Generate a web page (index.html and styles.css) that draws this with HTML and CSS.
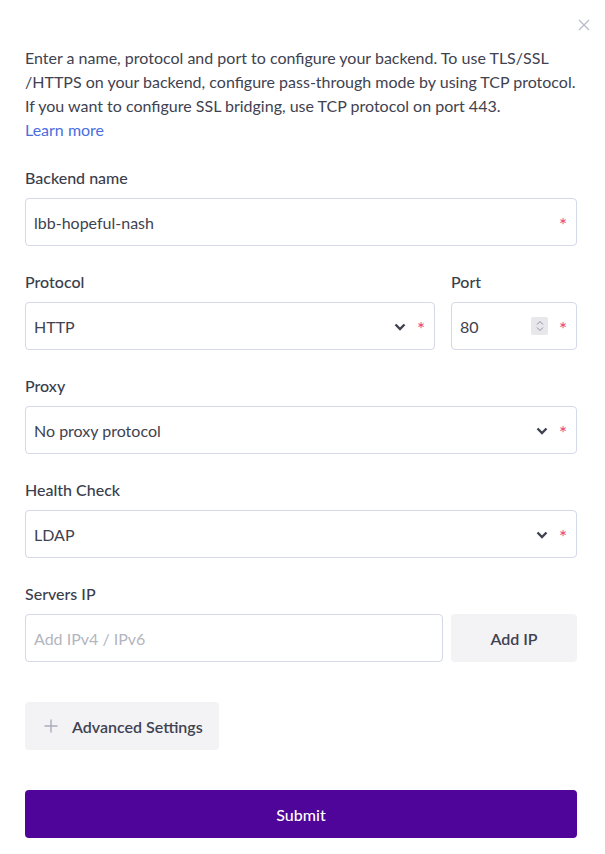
FILE: index.html
```html
<!DOCTYPE html>
<html>
<head>
<meta charset="utf-8">
<link rel="stylesheet" href="styles.css">
</head>
<body>
<div class="modal">
  <div class="top">
    <button class="close" aria-label="Close">
      <svg width="12" height="12" viewBox="0 0 12 12"><path d="M1 1L11 11M11 1L1 11" stroke="#b9bccb" stroke-width="1.3" fill="none"/></svg>
    </button>
  </div>
  <p class="intro">Enter a name, protocol and port to configure your backend. To use TLS/SSL /HTTPS on your backend, configure pass-through mode by using TCP protocol. If you want to configure SSL bridging, use TCP protocol on port 443.<br><a href="#" class="link">Learn more</a></p>

  <div class="group">
    <div class="label">Backend name</div>
    <div class="field"><span class="value">lbb-hopeful-nash</span><span class="star">*</span></div>
  </div>

  <div class="group row">
    <div class="col grow">
      <div class="label">Protocol</div>
      <div class="field"><span class="value">HTTP</span><span class="chev"><svg width="12" height="8" viewBox="0 0 12 8"><path d="M1.5 1.5L6 6L10.5 1.5" stroke="#3f4250" stroke-width="2.4" fill="none"/></svg></span><span class="star">*</span></div>
    </div>
    <div class="col port">
      <div class="label">Port</div>
      <div class="field"><span class="value">80</span><span class="spin"><svg width="10" height="14" viewBox="0 0 10 14"><path d="M2 5.5L5 2.5L8 5.5M2 8.5L5 11.5L8 8.5" stroke="#8e91a0" stroke-width="1" fill="none"/></svg></span><span class="star">*</span></div>
    </div>
  </div>

  <div class="group">
    <div class="label">Proxy</div>
    <div class="field"><span class="value">No proxy protocol</span><span class="chev"><svg width="12" height="8" viewBox="0 0 12 8"><path d="M1.5 1.5L6 6L10.5 1.5" stroke="#3f4250" stroke-width="2.4" fill="none"/></svg></span><span class="star">*</span></div>
  </div>

  <div class="group">
    <div class="label">Health Check</div>
    <div class="field"><span class="value">LDAP</span><span class="chev"><svg width="12" height="8" viewBox="0 0 12 8"><path d="M1.5 1.5L6 6L10.5 1.5" stroke="#3f4250" stroke-width="2.4" fill="none"/></svg></span><span class="star">*</span></div>
  </div>

  <div class="group last">
    <div class="label">Servers IP</div>
    <div class="row ip">
      <div class="field grow"><span class="value placeholder">Add IPv4 / IPv6</span></div>
      <button class="btn add">Add IP</button>
    </div>
  </div>

  <button class="btn adv"><svg width="14" height="14" viewBox="0 0 14 14"><path d="M7 0.5V13.5M0.5 7H13.5" stroke="#a9acba" stroke-width="1.4"/></svg><span>Advanced Settings</span></button>

  <button class="submit">Submit</button>
</div>
</body>
</html>
```

FILE: styles.css
```css
* { box-sizing: border-box; }
body {
  margin: 0;
  background: #fff;
  font-family: Lato, "Open Sans", sans-serif;
  color: #3f4250;
}
.modal {
  width: 552px;
  margin-left: 25px;
  padding-top: 15px;
}
.top {
  display: flex;
  justify-content: flex-end;
  margin-right: -13px;
  height: 22px;
}
.close {
  border: 0;
  background: none;
  padding: 0;
  width: 12px;
  height: 12px;
  display: flex;
  margin-top: 4px;
}
.intro {
  margin: 9px 0 24px;
  font-size: 16px;
  line-height: 24px;
  color: #3f4250;
}
.link {
  color: #4a6ee0;
  text-decoration: none;
}
.group {
  margin-bottom: 24px;
}
.group.last { margin-bottom: 40px; }
.label {
  font-size: 16px;
  line-height: 24px;
  margin-bottom: 8px;
  color: #3a3d4c;
  font-weight: 500;
}
.field {
  height: 48px;
  border: 1px solid #d5d8e6;
  border-radius: 4px;
  display: flex;
  align-items: center;
  padding: 0 8px 0 8px;
  font-size: 16px;
}
.value { flex: 1; color: #3f4250; }
.placeholder { color: #b3b5c0; }
.star {
  color: #e8417a;
  font-size: 19px;
  width: 10px;
  text-align: center;
  margin-left: 10px;
  line-height: 1;
  padding-top: 5px;
}
.chev { display: flex; padding-top: 2px; }
.spin {
  display: flex;
  align-items: center;
  justify-content: center;
  width: 17px;
  height: 18px;
  background: #e7e7ec;
  border-radius: 2px;
}
.row {
  display: flex;
  gap: 16px;
}
.grow { flex: 1; }
.port { width: 126px; }
.ip { gap: 8px; }
.btn {
  border: 0;
  background: #f3f3f6;
  border-radius: 4px;
  font-family: inherit;
  font-size: 16px;
  color: #3f4250;
  height: 48px;
  cursor: pointer;
}
.add { width: 126px; font-weight: 600; }
.adv {
  display: flex;
  align-items: center;
  gap: 14px;
  padding: 0 16px 0 19px;
  font-weight: 600;
  margin-bottom: 40px;
}
.submit {
  display: block;
  width: 100%;
  height: 48px;
  border: 0;
  border-radius: 4px;
  background: #4f0599;
  color: #fff;
  font-family: inherit;
  font-size: 16px;
  font-weight: 500;
}
```
